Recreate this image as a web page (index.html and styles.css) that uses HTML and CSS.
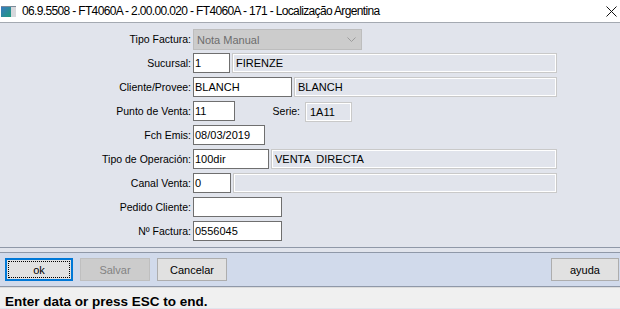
FILE: index.html
```html
<!DOCTYPE html>
<html>
<head>
    <title>Localização Argentina</title>
    <link rel="stylesheet" href="styles.css">
</head>
<body>
    <div class="titlebar">
        <svg class="app-icon" width="15" height="11" viewBox="0 0 15 11">
            <defs>
                <linearGradient id="ico" x1="0" y1="0" x2="1" y2="1">
                    <stop offset="0" stop-color="#3b78c4"/>
                    <stop offset="1" stop-color="#1f9a7c"/>
                </linearGradient>
            </defs>
            <rect x="0" y="0" width="10" height="11" fill="url(#ico)"/>
            <rect x="10" y="0" width="5" height="11" fill="#d6d8dc"/>
            <rect x="0" y="0" width="15" height="1" fill="#7c8a99"/>
        </svg>
        <span class="title">06.9.5508 - FT4060A - 2.00.00.020 - FT4060A - 171 - Localização Argentina</span>
        <svg class="close" width="11" height="11" viewBox="0 0 11 11">
            <path d="M0.5 0.5 L10.5 10.5 M10.5 0.5 L0.5 10.5" stroke="#111" stroke-width="1"/>
        </svg>
    </div>

    <div class="form">
        <div class="lbl">Tipo Factura:</div>
        <div class="fld">
            <div class="select">
                <span>Nota Manual</span>
                <svg class="chevron" width="9" height="5" viewBox="0 0 9 5">
                    <path d="M0.5 0.5 L4.5 4.5 L8.5 0.5" fill="none" stroke="#9c9c9c" stroke-width="1"/>
                </svg>
            </div>
        </div>

        <div class="lbl">Sucursal:</div>
        <div class="fld">
            <div class="input w-37">1</div>
            <div class="ro">FIRENZE</div>
        </div>

        <div class="lbl">Cliente/Provee:</div>
        <div class="fld">
            <div class="input w-99">BLANCH</div>
            <div class="ro">BLANCH</div>
        </div>

        <div class="lbl">Punto de Venta:</div>
        <div class="fld">
            <div class="input w-42">11</div>
            <div class="lbl serie-lbl">Serie:</div>
            <div class="ro serie">1A11</div>
        </div>

        <div class="lbl">Fch Emis:</div>
        <div class="fld">
            <div class="input w-72">08/03/2019</div>
        </div>

        <div class="lbl">Tipo de Operación:</div>
        <div class="fld">
            <div class="input w-76">100dir</div>
            <div class="ro pre">VENTA  DIRECTA</div>
        </div>

        <div class="lbl">Canal Venta:</div>
        <div class="fld">
            <div class="input w-38">0</div>
            <div class="ro"></div>
        </div>

        <div class="lbl">Pedido Cliente:</div>
        <div class="fld">
            <div class="input w-89"></div>
        </div>

        <div class="lbl">Nº Factura:</div>
        <div class="fld">
            <div class="input w-89">0556045</div>
        </div>
    </div>

    <div class="buttons">
        <div class="btn btn-focus">ok</div>
        <div class="btn btn-disabled">Salvar</div>
        <div class="btn">Cancelar</div>
        <div class="btn btn-help">ayuda</div>
    </div>

    <div class="status">Enter data or press ESC to end.</div>
</body>
</html>
```

FILE: styles.css
```css
body {
    margin: 0;
    width: 620px;
    height: 309px;
    overflow: hidden;
    font-family: "Liberation Sans", Arial, sans-serif;
    font-size: 11px;
    color: #000;
    background: #e1e4ec;
}

.titlebar {
    height: 22px;
    display: flex;
    align-items: center;
    background: #fff;
    border-bottom: 1px solid #a4a9b1;
}

.app-icon {
    margin-left: 1px;
}

.title {
    margin-left: 6px;
    font-size: 12px;
    letter-spacing: -0.65px;
}

.close {
    margin-left: auto;
    margin-right: 3px;
}

.form {
    display: grid;
    grid-template-columns: 191px 364px;
    grid-auto-rows: 20px;
    column-gap: 2px;
    row-gap: 4px;
    padding: 6px 0 6px;
    border-bottom: 1px solid #8f98a8;
}

.lbl {
    display: flex;
    align-items: center;
    justify-content: flex-end;
    font-size: 10.5px;
    white-space: nowrap;
}

.fld {
    display: flex;
    gap: 2px;
    height: 20px;
}

.input {
    box-sizing: border-box;
    height: 20px;
    padding: 0 1px;
    line-height: 18px;
    border: 1px solid #6f6f6f;
    background: #fff;
    white-space: nowrap;
}

.w-37 { width: 37px; }
.w-38 { width: 38px; }
.w-42 { width: 42px; }
.w-72 { width: 72px; }
.w-76 { width: 76px; }
.w-89 { width: 89px; }
.w-99 { width: 99px; }

.ro {
    flex: 1;
    box-sizing: border-box;
    height: 20px;
    padding: 0 3px;
    line-height: 18px;
    border: 1px solid #c9c9c9;
    box-shadow: inset 0 0 0 1px #fff;
    white-space: nowrap;
}

.pre {
    white-space: pre;
}

.serie-lbl {
    width: 66px;
    padding-right: 3px;
    box-sizing: border-box;
}

.serie {
    flex: none;
    width: 47px;
    margin-top: 1px;
    padding-left: 4px;
}

.select {
    box-sizing: border-box;
    width: 169px;
    height: 21px;
    display: flex;
    align-items: center;
    padding-left: 3px;
    background: #cccccc;
    border: 1px solid #bdbdbd;
    color: #6d6d6d;
}

.chevron {
    margin-left: auto;
    margin-right: 5px;
}

.buttons {
    display: flex;
    gap: 7px;
    height: 23px;
    margin-top: 4px;
    padding: 5px 1px 5px 5px;
    background: #d1daeb;
    border-top: 1px solid #8f98a8;
    border-bottom: 1px solid #8f98a8;
}

.btn {
    position: relative;
    box-sizing: border-box;
    width: 70px;
    height: 23px;
    display: flex;
    align-items: center;
    justify-content: center;
    background: #e1e1e1;
    border: 1px solid #adadad;
    font-size: 11px;
}

.btn-focus {
    width: 68px;
    border-color: #0078d7;
    box-shadow: inset 0 0 0 1px #0078d7;
}

.btn-focus::after {
    content: "";
    position: absolute;
    top: 2px;
    left: 2px;
    right: 2px;
    bottom: 2px;
    border: 1px dotted #000;
}

.btn-disabled {
    background: #cccccc;
    border-color: #bfbfbf;
    color: #838383;
}

.btn-help {
    width: 68px;
    margin-left: auto;
}

.status {
    height: 21px;
    box-sizing: border-box;
    padding: 6px 0 0 5px;
    background: #f0f0f0;
    border-top: 1px solid #dcdcdc;
    font-size: 13.5px;
    font-weight: bold;
    white-space: nowrap;
}
```
